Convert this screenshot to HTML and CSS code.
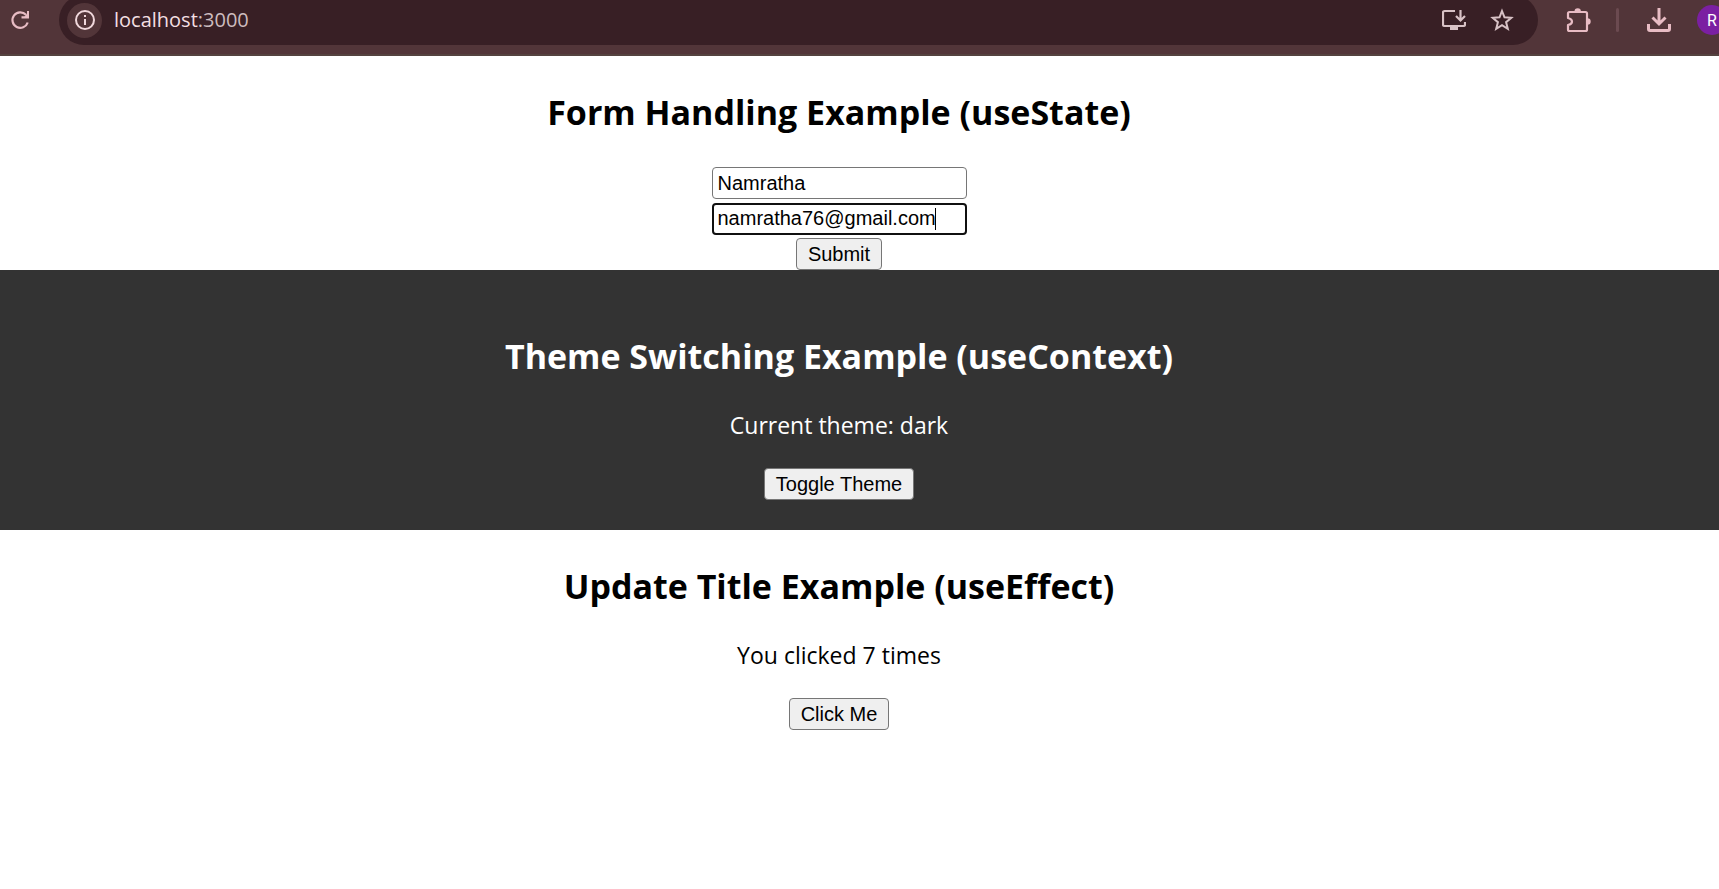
FILE: index.html
```
<!DOCTYPE html>
<html lang="en">
<head>
<meta charset="utf-8">
<title>You clicked 7 times</title>
<link rel="stylesheet" href="styles.css">
</head>
<body>
<header class="toolbar">
  <div class="toolbar-row">
    <button class="icon-button reload" type="button" aria-label="Reload">
      <svg width="20" height="20" viewBox="0 0 20 20" fill="none" stroke="currentColor" stroke-width="2.200"><path d="M17.700 12.500A7.800 7.800 0 1 1 16 4.800"/><path d="M19 1v7.500h-7.500v-2.200h3L17 3.800V1z" fill="currentColor" stroke="none"/></svg>
    </button>
    <div class="address">
      <button class="icon-button site-info" type="button" aria-label="Site information">
        <svg width="20" height="20" viewBox="0 0 20 20" fill="none" stroke="currentColor" stroke-width="2"><circle cx="10" cy="10" r="9"/><path d="M10 9v6M10 5v2"/></svg>
      </button>
      <span class="url">localhost<span class="port">:3000</span></span>
      <div class="address-actions">
        <button class="icon-button" type="button" aria-label="Install app">
          <svg width="24" height="22" viewBox="0 0 24 22" fill="none" stroke="currentColor" stroke-width="2.200"><path d="M13 2H2.500Q1 2 1 3.500V15.500Q1 17 2.500 17H21.500Q23 17 23 15.500V13"/><path d="M8 17h8v4H8z" fill="currentColor" stroke="none"/><path d="M18.500 1v10M14 7l4.500 4.500L23 7"/></svg>
        </button>
        <button class="icon-button" type="button" aria-label="Bookmark">
          <svg width="24" height="24" viewBox="0 0 24 24" fill="none" stroke="currentColor" stroke-width="2"><path d="M12 3l2.500 6.300 6.800.5-5.200 4.400 1.700 6.700L12 17.200l-5.800 3.700 1.700-6.700-5.200-4.400 6.800-.5z"/></svg>
        </button>
      </div>
    </div>
    <div class="tools">
      <button class="icon-button" type="button" aria-label="Extensions">
        <svg width="26" height="26" viewBox="0 0 26 26" fill="none" stroke="currentColor" stroke-width="2.200"><path d="M3.500 5H19.500Q21 5 21 6.500V22.500Q21 24 19.500 24H3.500Q2 24 2 22.500V18Q6 17.200 6 14.500T2 11V6.500Q2 5 3.500 5z" stroke-linejoin="round"/><path d="M8.500 4.500a3.200 3.200 0 0 1 6.400 0zM21.500 11.300a3.200 3.200 0 0 1 0 6.400z" fill="currentColor" stroke="none"/></svg>
      </button>
      <span class="divider"></span>
      <button class="icon-button" type="button" aria-label="Downloads">
        <svg width="24" height="24" viewBox="0 0 24 24" fill="none" stroke="currentColor" stroke-width="3"><path d="M12 0v16M5.500 9.500l6.500 6.500 6.500-6.500M1.500 16v5q0 1.500 1.500 1.500h18q1.500 0 1.500-1.500v-5"/></svg>
      </button>
      <button class="avatar" type="button" aria-label="Profile">R</button>
    </div>
  </div>
</header>
<main class="app">
  <section class="example">
    <h2 class="title">Form Handling Example (useState)</h2>
    <form class="form">
      <div class="fields">
        <input class="field" type="text" aria-label="Name" value="Namratha">
        <div class="focus-wrap"><input class="field field-focused" type="email" aria-label="Email" value="namratha76@gmail.com"><span class="caret"></span></div>
      </div>
      <button class="button" type="submit">Submit</button>
    </form>
  </section>
  <section class="example example-dark">
    <h2 class="title">Theme Switching Example (useContext)</h2>
    <p class="text">Current theme: dark</p>
    <button class="button" type="button">Toggle Theme</button>
  </section>
  <section class="example">
    <h2 class="title">Update Title Example (useEffect)</h2>
    <p class="text">You clicked 7 times</p>
    <button class="button" type="button">Click Me</button>
  </section>
</main>
</body>
</html>
```
FILE: styles.css
```
* { box-sizing: border-box; }
body {
  margin: 0;
  background: #fff;
  color: #000;
  font-family: "Segoe UI", "Open Sans", "Noto Sans", sans-serif;
  font-size: 23px;
}
.toolbar {
  overflow: hidden;
  background: #523539;
  border-bottom: 2px solid #54423f;
  padding-bottom: 9px;
}
.toolbar-row {
  display: flex;
  align-items: center;
  height: 50px;
  margin-top: -5px;
}
.icon-button {
  display: flex;
  flex: none;
  align-items: center;
  justify-content: center;
  padding: 0;
  border: 0;
  background: none;
  color: #e8bcc4;
}
.reload { margin: 0 29px 0 10px; }
.address {
  display: flex;
  flex: 1;
  align-items: center;
  height: 50px;
  padding: 0 24px 0 8px;
  border-radius: 25px;
  background: #381f25;
}
.site-info {
  width: 35px;
  height: 35px;
  border-radius: 50%;
  background: #523539;
  color: #f0d8dc;
}
.url {
  margin-left: 12px;
  padding-bottom: 2px;
  color: #f3dfe2;
  font-size: 20px;
}
.port { color: #cdbcbf; }
.address-actions {
  display: flex;
  align-items: center;
  gap: 24px;
  margin-left: auto;
}
.address-actions .icon-button { color: #d8c2c6; }
.tools {
  display: flex;
  flex: none;
  align-items: center;
  gap: 26px;
  margin: 0 -8px 0 28px;
}
.divider {
  width: 3px;
  height: 24px;
  margin: 0 2px 0 -2px;
  background: #6b4a50;
  border-radius: 2px;
}
.avatar {
  width: 30px;
  height: 30px;
  padding: 0;
  border: 0;
  border-radius: 50%;
  background: #7b1fa2;
  color: #fff;
  font: 16px Roboto, sans-serif;
}
.example {
  display: flex;
  flex-direction: column;
  align-items: center;
  padding: 32px 41px 0 0;
}
.example-dark {
  padding-top: 62px;
  padding-bottom: 30px;
  background: #333;
  color: #fff;
}
.title {
  margin: 0 0 29px;
  font-size: 34px;
  line-height: 48px;
}
.text {
  margin: 0 0 27px;
  line-height: 32px;
}
.form {
  display: flex;
  flex-direction: column;
  align-items: center;
  gap: 3px;
  margin-top: 2px;
}
.fields {
  display: grid;
  gap: 4px;
}
.focus-wrap { position: relative; }
.field, .button {
  display: block;
  height: 32px;
  border: 1px solid #767676;
  border-radius: 4px;
  font: 20px "Liberation Sans", Arial, sans-serif;
}
.field {
  width: 255px;
  padding: 1px 5px;
  background: #fff;
}
.field-focused {
  padding: 0 4px 1px;
  border: 2px solid #101010;
}
.caret {
  position: absolute;
  top: 5px;
  left: 223px;
  width: 1px;
  height: 22px;
  background: #000;
}
.button {
  padding: 0 11px;
  background: #efefef;
  color: #000;
}
```
